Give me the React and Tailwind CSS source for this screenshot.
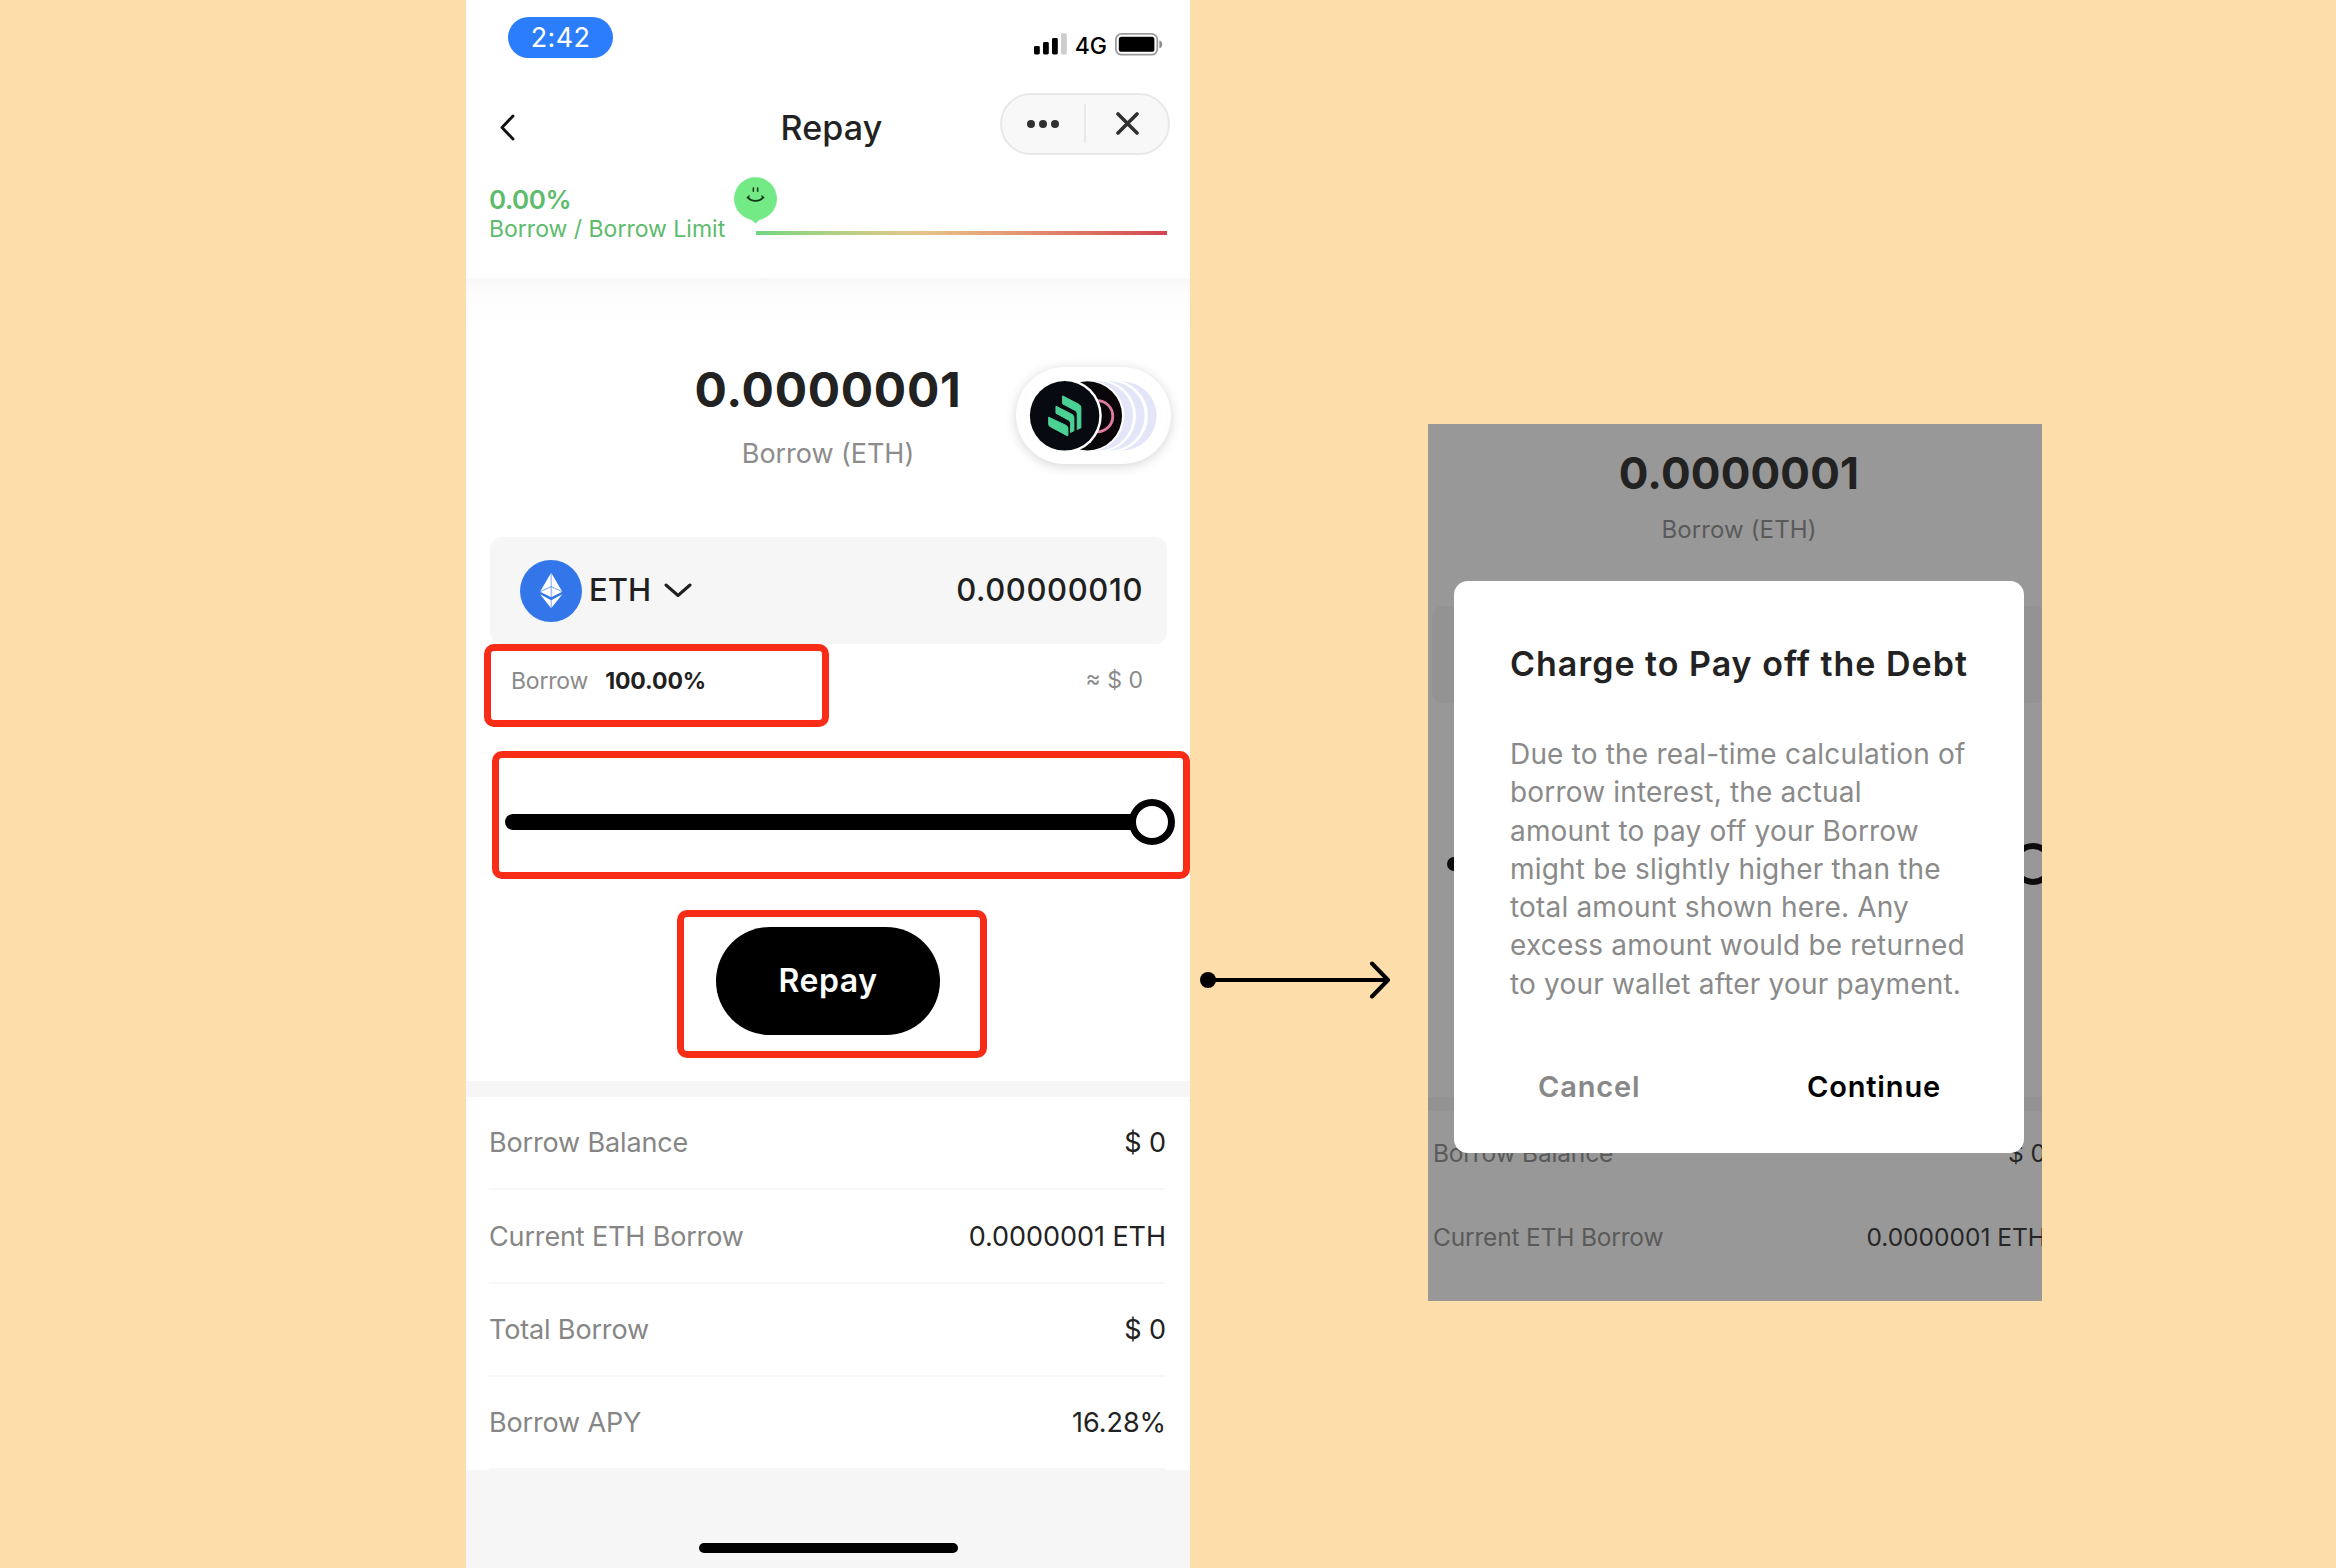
function SignalBars() {
  return (
    <svg className="h-[22px] w-[33px]" viewBox="0 0 33 22">
      <rect x="0" y="13" width="5.8" height="8.5" rx="1.4" />
      <rect x="9" y="9" width="5.8" height="12.5" rx="1.4" />
      <rect x="18" y="5" width="5.8" height="16.5" rx="1.4" />
      <rect x="27" y="0.3" width="5.8" height="21.2" rx="1.4" fill="#cdcdcd" />
    </svg>
  );
}

function Battery() {
  return (
    <svg className="h-[23px] w-[48px]" viewBox="0 0 48 23">
      <rect x="0.9" y="0.9" width="41.4" height="20.8" rx="5.6" fill="none" stroke="#9b9b9b" strokeWidth="1.8" />
      <rect x="3.8" y="3.8" width="35.6" height="15" rx="2.6" />
      <path d="M44.4 7.6c2 .6 2.8 2 2.8 3.8s-.8 3.2-2.8 3.8z" fill="#8b8b8b" />
    </svg>
  );
}

function Smiley() {
  return (
    <svg className="h-[47px] w-[43px]" viewBox="42 22 130 140">
      <path
        d="M107 161Q98 150 86 147.500A64.500 64.500 0 1 1 128 147.500Q116 150 107 161Z"
        fill="#73ea85"
        stroke="#73ea85"
        strokeWidth="1"
        strokeLinejoin="round"
      />
      <g fill="none" stroke="#12351a" strokeLinecap="round">
        <path d="M100.5 54v10M113.5 54v10" strokeWidth="4.5" />
        <path d="M85 83c8 13.500 36 13.500 44 0" strokeWidth="5.500" />
        <path d="M82 83.500l6-5.500M132 83.500l-6-5.500" strokeWidth="4" />
      </g>
    </svg>
  );
}

function TokenStack() {
  return (
    <svg className="h-[97px] w-[155px]" viewBox="108 80 466 292">
      <circle cx="427" cy="227" r="104" fill="#e3e6f8" />
      <circle cx="397" cy="227" r="108" fill="#fff" />
      <circle cx="391" cy="227" r="104" fill="#e3e6f8" />
      <circle cx="361" cy="227" r="108" fill="#fff" />
      <circle cx="356" cy="227" r="104" fill="#e3e6f8" />
      <circle cx="327" cy="227" r="107" fill="#fff" />
      <circle cx="323" cy="227" r="104" fill="#0a0508" />
      <circle cx="352" cy="228" r="47" fill="none" stroke="#dd7c9e" strokeWidth="8.500" />
      <circle cx="254" cy="227" r="112" fill="#fff" />
      <circle cx="254" cy="227" r="104.500" fill="#070a10" />
      <g fill="#4cd195" stroke="#4cd195" strokeWidth="3" strokeLinejoin="round">
        <path d="M248 167 298 193Q303 196 303 202V263L292 268V221Q292 214 286 211L248 191Z" />
        <path d="M228 198 277 223Q282 226 282 232V272L272 277V250Q272 243 266 240L228 219Z" />
        <path d="M206 231 257 255Q264 258 264 265V286L262 287 210 259Q206 257 206 252Z" />
      </g>
    </svg>
  );
}

function EthIcon() {
  return (
    <svg className="size-[62px]" viewBox="30 45 186 186">
      <circle cx="123" cy="138" r="93" fill="#3276ea" />
      <path d="M123.500 83 157 140 123.500 157 90 140Z" fill="#fff" />
      <path d="M90 148 123.500 166 157 148 123.500 190Z" fill="#fff" />
      <path d="M90 140 123.500 125 157 140M123.500 83V190" fill="none" stroke="#3276ea" strokeWidth="2" />
    </svg>
  );
}

function StatusBar() {
  return (
    <div className="flex h-[71px] items-start justify-between pr-[27px] pl-[42px]">
      <div className="mt-[17px] flex h-[41px] w-[105px] items-center justify-center rounded-full bg-[#2b7dfb] pt-px text-[27px] tracking-[0.3px] text-white">
        2:42
      </div>
      <div className="mt-[33px] flex items-start">
        <SignalBars />
        <span className="mt-[1px] ml-[8px] text-[23px] leading-[24px] font-medium">4G</span>
        <div className="ml-[8px]">
          <Battery />
        </div>
      </div>
    </div>
  );
}

function NavBar() {
  return (
    <div className="grid h-[106px] grid-cols-[1fr_auto_1fr] items-center pr-[20px] pl-[27px]">
      <svg className="mt-[6px] ml-[7px] h-[27px] w-[15px]" viewBox="0 0 15 27" fill="none" stroke="#111" strokeWidth="2.9" strokeLinecap="round" strokeLinejoin="round">
        <path d="M13 2 2 13.500 13 25" />
      </svg>
      <h1 className="mt-[7px] text-[34px] leading-[40px] font-medium tracking-[0.2px] text-[#222]">Repay</h1>
      <div className="-mt-[1px] flex h-[62px] w-[170px] items-center justify-self-end rounded-full border-2 border-[#e9e9e9] bg-[#f8f8f8]">
        <div className="flex flex-1 justify-center gap-[3.6px]">
          <i className="size-[8px] rounded-full bg-[#303030]" />
          <i className="size-[8px] rounded-full bg-[#303030]" />
          <i className="size-[8px] rounded-full bg-[#303030]" />
        </div>
        <div className="h-[39px] w-[2px] bg-[#e9e9e9]" />
        <div className="flex flex-1 justify-center">
          <svg className="size-[23px]" viewBox="0 0 23 23" stroke="#303030" strokeWidth="3.6" strokeLinecap="round">
            <path d="M2 2 21 21M21 2 2 21" />
          </svg>
        </div>
      </div>
    </div>
  );
}

function BorrowLimit() {
  return (
    <div className="flex h-[101px] items-start pr-[23px] pl-[23px]">
      <div className="w-[245px] pt-[6px] text-[#5dbb6c]">
        <div className="text-[26px] leading-[34px] font-semibold tracking-[-0.45px]">0.00%</div>
        <div className="pt-px text-[23px] leading-[22px] whitespace-nowrap">Borrow / Borrow Limit</div>
      </div>
      <div className="flex-1">
        <Smiley />
        <div className="mt-[7px] ml-[22px] h-[4px] bg-linear-to-r from-[#6fd680] via-[#e6c58c] via-40% to-[#d2434f]" />
      </div>
    </div>
  );
}

function Amount() {
  return (
    <div className="relative h-[259px] bg-linear-to-b from-[#f8f8f8] via-[#fdfdfd] via-[20px] to-white to-[46px] pt-[82px] text-center">
      <div className="text-[48px] leading-[60px] font-bold tracking-[0.7px] text-[#222]">0.0000001</div>
      <div className="mt-[14px] text-[27px] leading-[40px] tracking-[-0.05px] text-[#8c8c8c]">Borrow (ETH)</div>
      <div className="absolute top-[89px] right-[19px] rounded-full bg-white shadow-[0_2px_12px_rgba(0,0,0,0.17)]">
        <TokenStack />
      </div>
    </div>
  );
}

function TokenInput() {
  return (
    <div className="mr-[23px] ml-[24px] flex h-[107px] items-center rounded-[12px] bg-[#f6f6f6] pr-[24px] pl-[30px] text-[31px] font-medium text-[#202020]">
      <EthIcon />
      <span className="ml-[7px]">ETH</span>
      <svg className="ml-[13px] h-[15px] w-[28px]" viewBox="0 0 28 15" fill="none" stroke="#202020" strokeWidth="3" strokeLinecap="round" strokeLinejoin="round">
        <path d="M2 2 14 12.500 26 2" />
      </svg>
      <span className="ml-auto tracking-[0.6px]">0.00000010</span>
    </div>
  );
}

function Percent() {
  return (
    <div className="flex h-[83px] justify-between pr-[47px] pl-[18px] text-[23px]">
      <div className="flex w-[345px] items-center gap-[17px] rounded-[10px] border-[7px] border-[#f92c18] pb-[9px] pl-[20px]">
        <span className="tracking-[-0.2px] text-[#8a8a8a]">Borrow</span>
        <span className="font-bold tracking-[-0.1px] text-[#202020]">100.00%</span>
      </div>
      <div className="leading-[73px] text-[#8a8a8a]">≈ $ 0</div>
    </div>
  );
}

function Slider() {
  return (
    <div className="mt-[24px] ml-[26px] flex h-[128px] items-center rounded-[10px] border-[7px] border-[#f92c18] pt-[14px] pr-[8px] pl-[6px]">
      <div className="h-[16px] flex-1 rounded-l-full bg-black" />
      <div className="-ml-[4px] size-[46px] rounded-full border-[7px] border-black bg-white" />
    </div>
  );
}

function Submit() {
  return (
    <div className="mt-[31px] ml-[211px] h-[148px] w-[310px] rounded-[10px] border-[7px] border-[#f92c18] pt-[10px] pl-[32px]">
      <button className="block h-[108px] w-[224px] rounded-full bg-black text-[32px] font-semibold tracking-[0.55px] text-white">
        Repay
      </button>
    </div>
  );
}

const rows = [
  ["Borrow Balance", "$ 0"],
  ["Current ETH Borrow", "0.0000001 ETH"],
  ["Total Borrow", "$ 0"],
  ["Borrow APY", "16.28%"],
];

function PhoneScreen() {
  return (
    <section className="flex h-[1568px] w-[724px] flex-col overflow-hidden bg-white">
      <StatusBar />
      <NavBar />
      <BorrowLimit />
      <Amount />
      <TokenInput />
      <Percent />
      <Slider />
      <Submit />
      <div className="mt-[23px] h-[16px] shrink-0 bg-[#f6f6f6]" />
      <div className="pr-[24px] pl-[23px] text-[27px]">
        {rows.map(([label, value]) => (
          <div key={label} className="flex h-[93.25px] items-center justify-between border-b-2 border-[#f7f7f7] pt-[2px]">
            <span className="tracking-[-0.15px] text-[#868686]">{label}</span>
            <span className="tracking-[-0.05px] text-[#222]">{value}</span>
          </div>
        ))}
      </div>
      <div className="flex flex-1 items-end justify-center bg-[#f6f6f6] pb-[15px]">
        <div className="h-[10px] w-[259px] rounded-full bg-black" />
      </div>
    </section>
  );
}

function Dialog() {
  return (
    <div className="absolute top-[157px] left-[26px] h-[572px] w-[570px] rounded-[14px] bg-white pt-[63px] pl-[56px]">
      <h2 className="text-[34px] leading-[40px] font-semibold tracking-[1px] whitespace-nowrap text-[#222]">
        Charge to Pay off the Debt
      </h2>
      <p className="mt-[51px] text-[28px] leading-[38.3px] tracking-[0.18px] whitespace-nowrap text-[#8a8a8a]">
        Due to the real-time calculation of
        <br />
        borrow interest, the actual
        <br />
        amount to pay off your Borrow
        <br />
        might be slightly higher than the
        <br />
        total amount shown here. Any
        <br />
        excess amount would be returned
        <br />
        to your wallet after your payment.
      </p>
      <div className="mt-[64px] flex justify-between pr-[83px] pl-[28px] text-[29px] leading-[40px] font-semibold tracking-[0.85px]">
        <span className="text-[#888]">Cancel</span>
        <span className="text-black">Continue</span>
      </div>
    </div>
  );
}

function DialogScreen() {
  return (
    <section className="relative mt-[424px] h-[877px] w-[614px] overflow-hidden bg-[#989898]">
      <div className="ml-[4px] w-[614px] pt-[19px] text-center">
        <div className="text-[44px] leading-[60px] font-bold tracking-[0.2px] text-[#222]">0.0000001</div>
        <div className="mt-[12px] text-[24px] leading-[30px] tracking-[0.12px] text-[#5a5a5a]">Borrow (ETH)</div>
        <div className="mt-[61px] h-[97px] rounded-[10px] bg-[#939393]" />
        <div className="mt-[140px] ml-[15px] flex items-center">
          <div className="h-[14px] w-[569px] shrink-0 rounded-l-full bg-[#0c0c0c]" />
          <div className="-ml-[4px] size-[42px] shrink-0 rounded-full border-[6px] border-[#0c0c0c]" />
        </div>
      </div>
      <div className="mt-[212px] h-[14px] bg-[#939393]" />
      <div className="ml-[5px] w-[613px] text-[24.5px]">
        {rows.slice(0, 2).map(([label, value]) => (
          <div key={label} className="flex h-[84.5px] items-center justify-between">
            <span className="tracking-[-0.18px] text-[#5a5a5a]">{label}</span>
            <span className="text-[#262626]">{value}</span>
          </div>
        ))}
      </div>
      <Dialog />
    </section>
  );
}

function FlowArrow() {
  return (
    <svg className="mt-[958px] mr-[34px] ml-[8px] h-[44px] w-[196px]" viewBox="0 0 196 44" fill="none" stroke="#000" strokeWidth="4" strokeLinecap="round" strokeLinejoin="round">
      <circle cx="10" cy="22" r="8" fill="#000" stroke="none" />
      <path d="M10 22H190M174 5.500 190 22 174 38.500" />
    </svg>
  );
}

export default function App() {
  return (
    <main className="flex h-[1568px] w-[2336px] items-start overflow-hidden bg-[#fddda9] pl-[466px] font-['Inter',sans-serif] text-black">
      <PhoneScreen />
      <FlowArrow />
      <DialogScreen />
    </main>
  );
}
